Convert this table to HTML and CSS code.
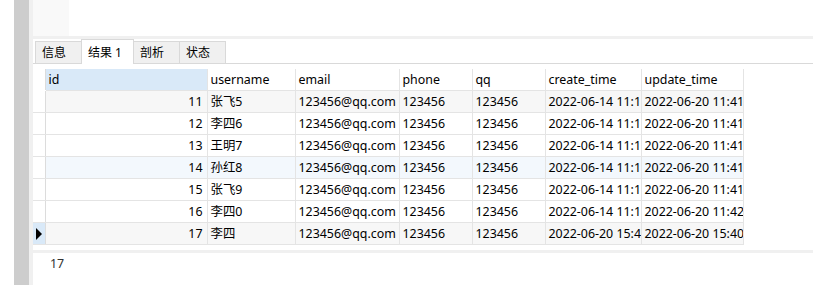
FILE: index.html
```html
<!DOCTYPE html>
<html lang="zh-CN">
<head>
    <meta charset="UTF-8">
    <title>结果 1</title>
    <link rel="stylesheet" href="styles.css">
</head>
<body>
    <div class="window">
        <div class="gutter-white"></div>
        <div class="gutter-bar"></div>
        <div class="gutter-light"></div>
        <div class="panel">
            <div class="toolbar">
                <div class="toolbar-left"></div>
            </div>
            <div class="band"></div>
            <div class="tabs">
                <div class="tab">信息</div>
                <div class="tab active">结果 1</div>
                <div class="tab">剖析</div>
                <div class="tab">状态</div>
            </div>
            <div class="grid-wrap">
                <table class="grid">
                    <colgroup>
                        <col class="c-ind">
                        <col class="c-id">
                        <col class="c-user">
                        <col class="c-mail">
                        <col class="c-phone">
                        <col class="c-qq">
                        <col class="c-create">
                        <col class="c-update">
                    </colgroup>
                    <tr class="head">
                        <th class="ind"></th>
                        <th class="sel">id</th>
                        <th>username</th>
                        <th>email</th>
                        <th>phone</th>
                        <th>qq</th>
                        <th>create_time</th>
                        <th>update_time</th>
                    </tr>
                    <tr class="gray">
                        <td class="ind"></td><td class="num">11</td><td>张飞5</td><td>123456@qq.com</td><td>123456</td><td>123456</td><td>2022-06-14 11:1</td><td>2022-06-20 11:41</td>
                    </tr>
                    <tr>
                        <td class="ind"></td><td class="num">12</td><td>李四6</td><td>123456@qq.com</td><td>123456</td><td>123456</td><td>2022-06-14 11:1</td><td>2022-06-20 11:41</td>
                    </tr>
                    <tr>
                        <td class="ind"></td><td class="num">13</td><td>王明7</td><td>123456@qq.com</td><td>123456</td><td>123456</td><td>2022-06-14 11:1</td><td>2022-06-20 11:41</td>
                    </tr>
                    <tr class="blue">
                        <td class="ind"></td><td class="num">14</td><td>孙红8</td><td>123456@qq.com</td><td>123456</td><td>123456</td><td>2022-06-14 11:1</td><td>2022-06-20 11:41</td>
                    </tr>
                    <tr>
                        <td class="ind"></td><td class="num">15</td><td>张飞9</td><td>123456@qq.com</td><td>123456</td><td>123456</td><td>2022-06-14 11:1</td><td>2022-06-20 11:41</td>
                    </tr>
                    <tr>
                        <td class="ind"></td><td class="num">16</td><td>李四0</td><td>123456@qq.com</td><td>123456</td><td>123456</td><td>2022-06-14 11:1</td><td>2022-06-20 11:42</td>
                    </tr>
                    <tr class="gray current">
                        <td class="ind"><span class="arrow"></span></td><td class="num">17</td><td>李四</td><td>123456@qq.com</td><td>123456</td><td>123456</td><td>2022-06-20 15:4</td><td>2022-06-20 15:40</td>
                    </tr>
                </table>
            </div>
            <div class="band status-band"></div>
            <div class="status">17</div>
        </div>
    </div>
</body>
</html>
```

FILE: styles.css
```css
html, body {
    margin: 0;
    padding: 0;
    background: #fff;
}

body {
    font-family: "Noto Sans", "Noto Sans CJK SC", sans-serif;
    font-size: 12.4px;
    color: #000;
}

.window {
    display: flex;
    width: 813px;
    height: 285px;
    overflow: hidden;
}

.gutter-white {
    width: 14px;
    background: #fff;
}

.gutter-bar {
    width: 15px;
    background: #cdcdcd;
}

.gutter-light {
    width: 4px;
    background: #f0f0f0;
}

.panel {
    flex: 1;
    display: flex;
    flex-direction: column;
    min-width: 0;
}

/* haut de la fenetre */
.toolbar {
    height: 36px;
    display: flex;
}

.toolbar-left {
    width: 36px;
    background: #f9f9f9;
}

.band {
    height: 3px;
    background: #f0f0f0;
}

/* onglets */
.tabs {
    display: flex;
    align-items: flex-end;
    height: 24px;
    padding-left: 2px;
    border-bottom: 1px solid #d9d9d9;
    font-size: 12px;
}

.tab {
    height: 21px;
    line-height: 21px;
    padding: 0 0 0 6px;
    width: 39px;
    background: #f0f0f0;
    border: 1px solid #d9d9d9;
    border-bottom: none;
    margin-right: -1px;
}

.tab.active {
    height: 24px;
    line-height: 25px;
    width: 45px;
    background: #fff;
    position: relative;
    top: 1px;
}

/* grille */
.grid-wrap {
    padding-top: 5px;
    height: 175px;
}

.grid {
    border-collapse: collapse;
    table-layout: fixed;
    width: 710px;
}

.c-ind { width: 12px; }
.c-id { width: 162px; }
.c-user { width: 88px; }
.c-mail { width: 104px; }
.c-phone { width: 73px; }
.c-qq { width: 73px; }
.c-create { width: 96px; }
.c-update { width: 102px; }

.grid th, .grid td {
    height: 21px;
    padding: 0 0 0 3px;
    border: 1px solid #e4e4e4;
    border-top: none;
    text-align: left;
    font-weight: normal;
    white-space: nowrap;
    overflow: hidden;
    line-height: 21px;
}

.grid th {
    height: 20px;
    border-bottom: 1px solid #e4e4e4;
}

.grid .ind {
    padding: 0;
    border-left: none;
    background: #fff;
    border-right: 1px solid #dcdcdc;
}

.grid th.ind {
    border-bottom-color: #fff;
}

.grid th.sel {
    background: #d9e9f8;
}

.grid td.num {
    text-align: right;
    padding: 0 4px 0 0;
}

.grid tr.gray td {
    background: #f7f7f7;
}

.grid tr.blue td {
    background: #f3f8fd;
}

.grid tr.gray td.ind,
.grid tr.blue td.ind {
    background: #fff;
}

.grid tr.current td.ind {
    background: #d9e9f8;
}

.arrow {
    display: block;
    width: 0;
    height: 0;
    margin-left: 3px;
    border-top: 6px solid transparent;
    border-bottom: 6px solid transparent;
    border-left: 6px solid #000;
}

.status-band {
    margin-top: 6px;
}

.status {
    padding: 2px 0 0 17px;
    color: #333;
}
```
